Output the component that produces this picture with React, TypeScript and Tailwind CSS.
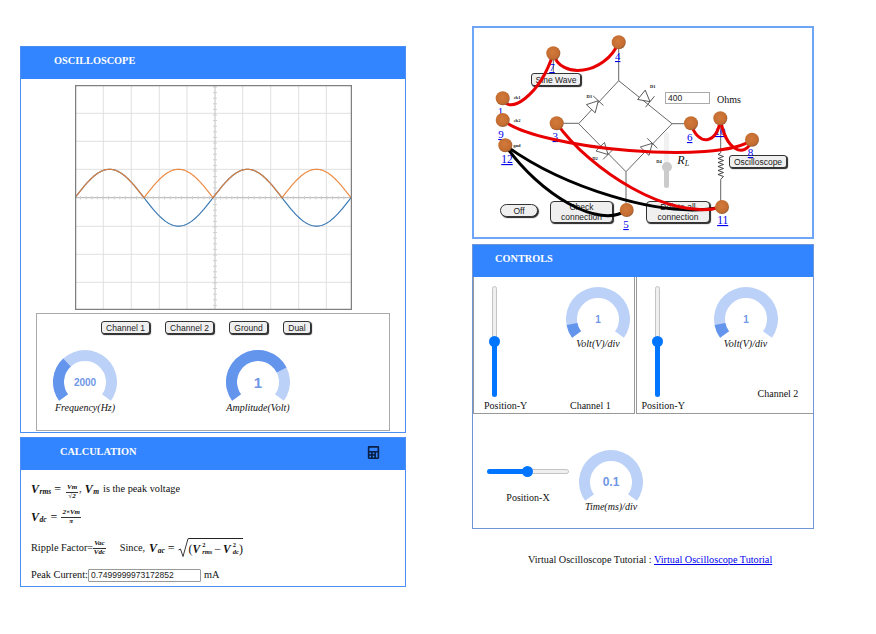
import { FaCalculator } from "react-icons/fa";

const SERIF = "font-['Liberation_Serif',serif]";
const SANS = "font-['Liberation_Sans',sans-serif]";

function pt(r: number, deg: number) {
  const a = (deg * Math.PI) / 180;
  return [r * Math.cos(a), r * Math.sin(a)];
}
function seg(from: number, to: number, R = 32, r = 21) {
  const large = to - from > 180 ? 1 : 0;
  const [a, b] = pt(R, from);
  const [c, d] = pt(R, to);
  const [e, f] = pt(r, to);
  const [g, h] = pt(r, from);
  return `M${a} ${b}A${R} ${R} 0 ${large} 1 ${c} ${d}L${e} ${f}A${r} ${r} 0 ${large} 0 ${g} ${h}Z`;
}

function Gauge({ value, frac, size }: { value: string; frac: number; size: number }) {
  const start = 144;
  const sweep = 252;
  const mid = start + sweep * frac;
  return (
    <svg width="64" height="52" viewBox="-32 -32 64 52" className="block shrink-0">
      <path d={seg(start, start + sweep)} fill="#bcd1f7" />
      {frac > 0 && <path d={seg(start, mid)} fill="#6495ed" />}
      <text x="0" y="0" textAnchor="middle" dominantBaseline="central" fontFamily="Liberation Sans, sans-serif" fontWeight="700" fontSize={size} fill="#6f97e6">
        {value}
      </text>
    </svg>
  );
}

function Btn({ children, className }: { children: React.ReactNode; className: string }) {
  return (
    <button className={`${SANS} bg-[#efefef] border border-[#333] shadow-[1px_1px_1px_#222] text-[8.5px] leading-[10px] text-[#222] flex items-center justify-center text-center ${className}`}>
      {children}
    </button>
  );
}

function Header({ title, pad, icon }: { title: string; pad: string; icon?: boolean }) {
  return (
    <div className={`h-[32px] pt-[8px] bg-[#3385ff] flex items-start justify-between text-white font-bold text-[10.3px] leading-[12px] ${pad}`}>
      <span>{title}</span>
      {icon && <FaCalculator className="text-[#0a1f44] text-[13px] mr-[25px]" />}
    </div>
  );
}

function VSlider({ ml }: { ml: string }) {
  return (
    <div className={`relative w-[5px] h-[111px] mt-[9px] flex flex-col ${ml}`}>
      <div className="flex-1 bg-[#efefef] border border-[#c4c4c4] rounded-t-full" />
      <div className="h-[55px] bg-[#0075ff] rounded-b-full" />
      <div className="absolute -left-[3px] top-[50px] w-[11px] h-[11px] rounded-full bg-[#0075ff]" />
    </div>
  );
}

function HSlider() {
  return (
    <div className="relative w-[82px] h-[5px] my-[5px] flex">
      <div className="w-[41px] bg-[#0075ff] rounded-l-full" />
      <div className="flex-1 bg-[#efefef] border border-[#c4c4c4] rounded-r-full" />
      <div className="absolute left-[35px] -top-[3px] w-[11px] h-[11px] rounded-full bg-[#0075ff]" />
    </div>
  );
}

function Scope() {
  const xs = [103.3, 131.3, 159.3, 187, 242.7, 270.7, 298.7, 326.3];
  const ys = [113.3, 141.3, 169.3, 226.3, 254.3, 282.3];
  const hTicks = Array.from({ length: 49 }, (_, i) => 75 + i * 5.6);
  const vTicks = Array.from({ length: 40 }, (_, i) => 87 + i * 5.6);
  const n = 276;
  const blue: string[] = [];
  const orange: string[] = [];
  for (let i = 0; i <= n; i++) {
    const x = 75 + i;
    const s = Math.sin(((x - 75) / 69) * Math.PI);
    blue.push(`${x},${197.7 - 28.4 * s}`);
    orange.push(`${x},${197.7 - 28.4 * Math.abs(s)}`);
  }
  return (
    <svg width="277" height="225" viewBox="75 85 277 225" className="block ml-[54px] mt-[6px]">
      <rect x="75" y="85" width="277" height="225" fill="#fff" />
      {xs.map((x) => (
        <line key={x} x1={x} x2={x} y1="86" y2="309" stroke="#e0e0e0" />
      ))}
      {ys.map((y) => (
        <line key={y} x1="76" x2="351" y1={y} y2={y} stroke="#e0e0e0" />
      ))}
      <line x1="215" x2="215" y1="86" y2="309" stroke="#c0c0c0" />
      <line x1="76" x2="351" y1="197.7" y2="197.7" stroke="#b0b0b0" />
      {hTicks.map((x) => (
        <line key={x} x1={x} x2={x} y1="196" y2="199.5" stroke="#d0d0d0" />
      ))}
      {vTicks.map((y) => (
        <line key={y} x1="213" x2="217" y1={y} y2={y} stroke="#d0d0d0" />
      ))}
      <polyline points={blue.join(" ")} fill="none" stroke="#3b7ab5" strokeWidth="1.2" />
      <polyline points={orange.join(" ")} fill="none" stroke="#ea8032" strokeOpacity="0.9" strokeWidth="1.2" />
      <rect x="75.5" y="85.5" width="276" height="224" fill="none" stroke="#808080" strokeWidth="1.5" />
    </svg>
  );
}

function Diode({ x, y, a }: { x: number; y: number; a: number }) {
  return (
    <g transform={`translate(${x} ${y}) rotate(${a})`}>
      <path d="M-11 -6L0 0L-11 6Z" fill="#fff" stroke="#555" strokeWidth="0.9" />
      <line x1="0" x2="0" y1="-7" y2="7" stroke="#555" strokeWidth="0.9" />
    </g>
  );
}

const NODES: [number, number][] = [
  [553.3, 53.3], [618.7, 42.3], [502.7, 98.3], [502.7, 120], [556.7, 123.3], [505.3, 145.3],
  [626.7, 210], [691, 123.3], [720.3, 118.3], [752, 139.7], [722, 207],
];
const LINKS: [string, number, number, number][] = [
  ["7", 552, 71, 11], ["4", 617.7, 60, 11], ["1", 500.5, 115, 11], ["9", 501, 138, 11], ["3", 555.3, 140, 11],
  ["12", 507, 163, 11.5], ["5", 626, 228, 11], ["6", 689.7, 141, 11], ["10", 720, 135, 11], ["8", 750.5, 156, 11], ["11", 722.7, 224, 11.5],
];
const SMALL: [string, number, number][] = [
  ["ch1", 517, 99], ["ch2", 517, 121.5], ["gnd", 517, 147], ["D3", 589.3, 98], ["D1", 652.7, 88], ["D4", 659, 162.7], ["D2", 595, 160],
];

function Circuit() {
  const red = [
    "M502.7 98.3C508 116 540 96 553.3 53.3",
    "M553.3 53.3C560 80 605 75 618.7 42.3",
    "M502.7 120C540 150 720 165 752 139.7",
    "M556.7 123.3C590 170 670 222 722 207",
    "M691 123.3C697 146 718 146 720.3 118.3",
    "M720.3 118.3C725 150 745 160 752 139.7",
  ];
  const black = ["M505.3 145.3C540 195 600 230 626.7 210", "M505.3 145.3C560 185 660 220 722 207"];
  return (
    <div className="relative w-[342px] h-[213px] border-2 border-[#6ea5f7] bg-white shrink-0">
      <Btn className="absolute left-[57px] top-[45px] w-[50px] h-[13px] rounded-[3px]">Sine Wave</Btn>
      <Btn className="absolute left-[255px] top-[127px] w-[58px] h-[13px] rounded-[3px]">Oscilloscope</Btn>
      <Btn className="absolute left-[26px] top-[176px] w-[38px] h-[13px] rounded-full">Off</Btn>
      <Btn className="absolute left-[76px] top-[173px] w-[63px] h-[22px] rounded-[4px]">Check<br />connection</Btn>
      <Btn className="absolute left-[172px] top-[173px] w-[64px] h-[22px] rounded-[4px]">Delete all<br />connection</Btn>
      <input
        readOnly
        value="400"
        className={`${SANS} absolute left-[191px] top-[64px] w-[45px] h-[12px] border border-[#aaa] text-[8.5px] px-[2px] text-[#222] outline-none`}
      />
      <span className={`${SERIF} absolute left-[243px] top-[66px] text-[10px] leading-[12px] text-[#111]`}>Ohms</span>
      <div className="absolute left-[190px] top-[104px] w-[5px] h-[56px] flex flex-col">
        <div className="flex-1 bg-[#f1f1f1] rounded-t-full" />
        <div className="h-[21px] bg-[#cbcbcb] rounded-b-full" />
        <div className="absolute -left-[2.5px] top-[30px] w-[10px] h-[10px] rounded-full bg-[#cbcbcb]" />
      </div>
      <svg viewBox="472 26 341 213" width="341" height="213" className="absolute -left-[2px] -top-[2px] pointer-events-none">
        <defs>
          <radialGradient id="ball" cx="0.45" cy="0.42" r="0.6">
            <stop offset="0" stopColor="#d17a3c" />
            <stop offset="0.75" stopColor="#c56d30" />
            <stop offset="1" stopColor="#8c5a38" />
          </radialGradient>
        </defs>
        <g stroke="#555" strokeWidth="0.9" fill="none">
          <path d="M618.7 42.3V80.7L672 123.7L626 171.7L578.7 123.7L618.7 80.7" />
          <path d="M556.7 123.3H578.7M672 123.7H691M626 171.7V210M553.3 53.3V73M720.7 118V152.7M720.7 179.3V207" />
          <path d="M720.7 152.7L718 154.5L723.5 156.5L718 158.5L723.5 160.5L718 162.5L723.5 164.5L718 166.5L723.5 168.5L718 170.5L723.5 172.5L718 174.5L723.5 176.5L720.7 179.3" stroke="#333" />
        </g>
        <Diode x={598.3} y={100.7} a={-47} />
        <Diode x={650} y={101.7} a={39} />
        <Diode x={608} y={154.5} a={45} />
        <Diode x={652.3} y={143.3} a={-46} />
        {SMALL.map(([t, x, y]) => (
          <text key={t} x={x} y={y} textAnchor="middle" fontFamily="Liberation Serif, serif" fontWeight="700" fontSize="4.5" fill="#222">
            {t}
          </text>
        ))}
        <text x="677.3" y="164" fontFamily="Liberation Serif, serif" fontStyle="italic" fontSize="12" fill="#111">
          R
          <tspan fontSize="8" dy="2">L</tspan>
        </text>
        {LINKS.map(([t, x, y, s]) => (
          <text key={t} x={x} y={y} textAnchor="middle" fontFamily="Liberation Serif, serif" fontSize={s} fill="#0000ee" textDecoration="underline">
            {t}
          </text>
        ))}
        {black.map((d) => (
          <path key={d} d={d} fill="none" stroke="#000" strokeWidth="3" />
        ))}
        {red.map((d) => (
          <path key={d} d={d} fill="none" stroke="#e80000" strokeWidth="3" />
        ))}
        {NODES.map(([x, y]) => (
          <circle key={x} cx={x} cy={y} r="7" fill="url(#ball)" />
        ))}
      </svg>
    </div>
  );
}

function V({ sub }: { sub: string }) {
  return (
    <span className="inline-flex items-center italic font-bold text-[12px]">
      V
      <span className="text-[7.5px] leading-[7px] ml-[0.5px] mt-[5px]">{sub}</span>
    </span>
  );
}

function VS({ sub }: { sub: string }) {
  return (
    <span className="inline-flex items-center italic font-bold text-[11.5px] leading-[14px]">
      <span className="mr-[2px]">V</span>
      <span className="inline-flex flex-col text-[6.5px] leading-[6.5px]">
        <span className="not-italic">2</span>
        <span>{sub}</span>
      </span>
    </span>
  );
}

function Frac({ top, bottom }: { top: React.ReactNode; bottom: React.ReactNode }) {
  return (
    <span className="inline-flex flex-col items-center text-[7px] leading-[7.5px] font-bold italic">
      <span className="border-b border-[#333] px-[1px]">{top}</span>
      <span>{bottom}</span>
    </span>
  );
}

function Calculation() {
  return (
    <div className={`border border-[#4d8ef5] h-[150px] mt-[4px] bg-white ${SERIF}`}>
      <Header title="CALCULATION" pad="pl-[39px]" icon />
      <div className="pl-[10px] text-[10.3px] text-[#111]">
        <div className="h-[16px] mt-[11px] flex items-center gap-[3px]">
          <V sub="rms" />
          <span className="text-[12px]">=</span>
          <span className="ml-[2px]"><Frac top="Vm" bottom="√2" /></span>
          <span className="-ml-[2px]">,</span>
          <V sub="m" />
          <span className="ml-[1px]">is the peak voltage</span>
        </div>
        <div className="h-[16px] mt-[12px] flex items-center gap-[3px]">
          <V sub="dc" />
          <span className="text-[12px] mx-[1px]">=</span>
          <Frac top="2×Vm" bottom="π" />
        </div>
        <div className="h-[20px] mt-[13px] flex items-center">
          <span>Ripple Factor=</span>
          <Frac top="Vac" bottom="Vdc" />
          <span className="ml-[14px]">Since,</span>
          <span className="ml-[4px]"><V sub="ac" /></span>
          <span className="text-[12px] mx-[3px]">=</span>
          <svg width="11" height="20" viewBox="0 0 11 20" className="block">
            <path d="M0.5 12L2.5 11L5 18.5L10 0.7H11" fill="none" stroke="#222" strokeWidth="0.9" />
          </svg>
          <span className="border-t border-[#222] h-[20px] flex items-center whitespace-nowrap">
            <span className="text-[12px]">(</span>
            <VS sub="rms" />
            <span className="text-[12px] mx-[2px]">−</span>
            <VS sub="dc" />
            <span className="text-[12px]">)</span>
          </span>
        </div>
        <div className="h-[14px] mt-[10px] flex items-center">
          <span>Peak Current:</span>
          <input
            readOnly
            value="0.7499999973172852"
            className={`${SANS} w-[113px] h-[13px] border border-[#999] rounded-[1px] text-[8.5px] px-[2px] text-[#222] outline-none`}
          />
          <span className="ml-[3px]">mA</span>
        </div>
      </div>
    </div>
  );
}

export default function App() {
  return (
    <div className={`flex items-start w-[876px] h-[634px] bg-white overflow-hidden ${SERIF}`}>
      <div className="w-[386px] ml-[20px] mt-[46px] shrink-0">
        <div className="border border-[#4d8ef5] h-[387px] bg-white">
          <Header title="OSCILLOSCOPE" pad="pl-[33px]" />
          <Scope />
          <div className="mx-[15px] mt-[3px] h-[118px] border border-[#aaa]">
            <div className="flex ml-[64px] mt-[7px] gap-[15px]">
              <Btn className="w-[49px] h-[13px] rounded-[3px]">Channel 1</Btn>
              <Btn className="w-[49px] h-[13px] rounded-[3px]">Channel 2</Btn>
              <Btn className="w-[39px] h-[13px] rounded-[3px]">Ground</Btn>
              <Btn className="w-[28px] h-[13px] rounded-[3px]">Dual</Btn>
            </div>
            <div className="flex mt-[16px] ml-[16px] gap-[109px]">
              <div className="flex flex-col items-center w-[64px]">
                <Gauge value="2000" frac={0.33} size={10} />
                <span className="italic text-[10px] leading-[12px] whitespace-nowrap text-[#111]">Frequency(Hz)</span>
              </div>
              <div className="flex flex-col items-center w-[64px]">
                <Gauge value="1" frac={0.75} size={15} />
                <span className="italic text-[10px] leading-[12px] whitespace-nowrap text-[#111]">Amplitude(Volt)</span>
              </div>
            </div>
          </div>
        </div>
        <Calculation />
      </div>

      <div className="w-[342px] ml-[66px] mt-[26px] shrink-0">
        <Circuit />
        <div className="mt-[5px] h-[285px] border border-[#6f96d6] bg-white">
          <Header title="CONTROLS" pad="pl-[22px]" />
          <div className="flex h-[137px] text-[10px] text-[#111]">
            <div className="w-[162px] border-x border-b border-[#999] flex">
              <div className="w-[92px] flex flex-col">
                <VSlider ml="ml-[18px]" />
                <span className="mt-auto mb-[1px] ml-[10px] leading-[12px]">Position-Y</span>
              </div>
              <div className="w-[64px] flex flex-col">
                <div className="mt-[10px]"><Gauge value="1" frac={0.1} size={10} /></div>
                <span className="italic -mt-[1px] text-center leading-[12px] whitespace-nowrap">Volt(V)/div</span>
                <span className="mt-auto mb-[1px] ml-[4px] leading-[12px] whitespace-nowrap">Channel 1</span>
              </div>
            </div>
            <div className="w-[178px] border-l border-b border-[#999] flex ml-[1px]">
              <div className="w-[77px] flex flex-col shrink-0">
                <VSlider ml="ml-[18px]" />
                <span className="mt-auto mb-[1px] ml-[5px] leading-[12px]">Position-Y</span>
              </div>
              <div className="w-[64px] flex flex-col">
                <div className="mt-[10px]"><Gauge value="1" frac={0.1} size={10} /></div>
                <span className="italic -mt-[1px] text-center leading-[12px] whitespace-nowrap">Volt(V)/div</span>
                <span className="mt-auto mb-[13px] ml-[44px] w-[44px] leading-[12px] whitespace-nowrap">Channel 2</span>
              </div>
            </div>
          </div>
          <div className="flex text-[10px] text-[#111]">
            <div className="ml-[14px] mt-[50px] w-[82px] flex flex-col items-center">
              <HSlider />
              <span className="mt-[13px] leading-[12px]">Position-X</span>
            </div>
            <div className="ml-[10px] mt-[36px] w-[64px] flex flex-col items-center">
              <Gauge value="0.1" frac={0} size={12} />
              <span className="italic leading-[12px] -mt-[1px] whitespace-nowrap">Time(ms)/div</span>
            </div>
          </div>
        </div>
        <p className="mt-[25px] ml-[56px] text-[10.2px] leading-[12px] text-[#111] whitespace-nowrap">
          Virtual Oscilloscope Tutorial : <a href="#" className="text-[#0000ee] underline">Virtual Oscilloscope Tutorial</a>
        </p>
      </div>
    </div>
  );
}
